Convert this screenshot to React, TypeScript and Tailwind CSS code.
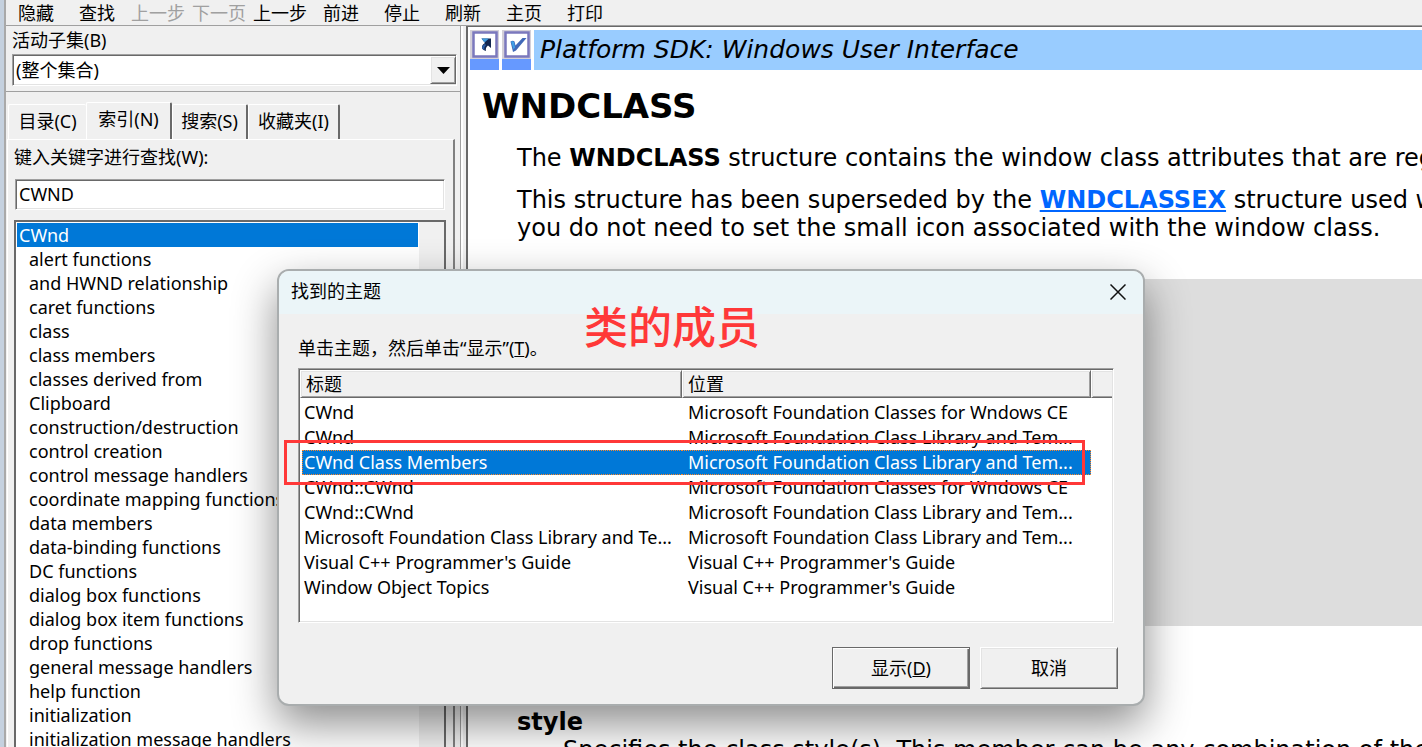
import { clsx } from 'clsx'

type Topic = {
  title: string
  location: string
}

const toolbarItems = [
  { label: '隐藏' },
  { label: '查找' },
  { label: '上一步', disabled: true },
  { label: '下一页', disabled: true },
  { label: '上一步' },
  { label: '前进' },
  { label: '停止' },
  { label: '刷新' },
  { label: '主页' },
  { label: '打印' }
]

const tabs = ['目录(C)', '索引(N)', '搜索(S)', '收藏夹(I)']

const keywords = [
  'alert functions',
  'and HWND relationship',
  'caret functions',
  'class',
  'class members',
  'classes derived from',
  'Clipboard',
  'construction/destruction',
  'control creation',
  'control message handlers',
  'coordinate mapping functions',
  'data members',
  'data-binding functions',
  'DC functions',
  'dialog box functions',
  'dialog box item functions',
  'drop functions',
  'general message handlers',
  'help function',
  'initialization',
  'initialization message handlers'
]

const topics: Topic[] = [
  { title: 'CWnd', location: 'Microsoft Foundation Classes for Wndows CE' },
  { title: 'CWnd', location: 'Microsoft Foundation Class Library and Tem...' },
  { title: 'CWnd Class Members', location: 'Microsoft Foundation Class Library and Tem...' },
  { title: 'CWnd::CWnd', location: 'Microsoft Foundation Classes for Wndows CE' },
  { title: 'CWnd::CWnd', location: 'Microsoft Foundation Class Library and Tem...' },
  {
    title: 'Microsoft Foundation Class Library and Te...',
    location: 'Microsoft Foundation Class Library and Tem...'
  },
  { title: "Visual C++ Programmer's Guide", location: "Visual C++ Programmer's Guide" },
  { title: 'Window Object Topics', location: "Visual C++ Programmer's Guide" }
]

const SELECTED_TOPIC = 2

const sunken =
  'border border-t-[#a0a0a0] border-l-[#a0a0a0] border-r-white border-b-white shadow-[inset_1px_1px_#696969,inset_-1px_-1px_#e3e3e3]'
const raised =
  'border border-t-white border-l-white border-r-[#696969] border-b-[#696969] shadow-[inset_1px_1px_#e3e3e3,inset_-1px_-1px_#a0a0a0]'

const Toolbar = () => (
  <div className="flex h-[26px] shrink-0 border-b border-[#a0a0a0]">
    {toolbarItems.map(({ label, disabled }, index) => (
      <button
        key={index}
        type="button"
        disabled={disabled}
        className={clsx(
          'w-[61px] shrink-0 pr-px pb-[2px] text-center whitespace-nowrap',
          disabled && 'text-[#a0a0a0]'
        )}
      >
        {label}
      </button>
    ))}
  </div>
)

const IndexPanel = () => (
  <div className="mr-[5px] ml-px flex min-h-0 flex-1 flex-col border-t border-r-2 border-l border-t-white border-r-[#808080] border-l-white pr-[7px] pl-[6px]">
    <label htmlFor="keyword" className="mt-[3px] leading-7">
      键入关键字进行查找(W):
    </label>
    <input
      id="keyword"
      type="text"
      defaultValue="CWND"
      className={clsx('mx-px mt-2 h-[31px] bg-white px-[3px] pb-[2px] outline-none', sunken)}
    />
    <div className="mt-[10px] flex min-h-0 flex-1 overflow-hidden border-2 border-b-0 border-[#696969] bg-white">
      <ul className="min-w-0 flex-1 whitespace-nowrap">
        <li className="mt-px mr-px ml-px h-6 bg-[#0078d7] pl-[2px] leading-6 text-white">CWnd</li>
        {keywords.map(keyword => (
          <li key={keyword} className="h-6 pl-[13px] leading-6">
            {keyword}
          </li>
        ))}
      </ul>
      <div className="w-[25px] bg-[#f0f0f0]" />
    </div>
  </div>
)

const Sidebar = () => (
  <div className="flex w-[455px] shrink-0 flex-col border-r border-[#a0a0a0]">
    <div className="border-b border-[#a0a0a0] pr-[3px] pb-[5px] pl-[6px]">
      <label htmlFor="subset" className="block h-7 leading-7">
        活动子集(B)
      </label>
      <div className="relative">
        <select
          id="subset"
          className={clsx('block h-8 w-full appearance-none bg-white px-[3px] outline-none', sunken)}
        >
          <option>(整个集合)</option>
        </select>
        <span
          className={clsx(
            'pointer-events-none absolute top-[2px] right-px flex h-7 w-[26px] items-center justify-center bg-[#f0f0f0]',
            raised
          )}
        >
          <svg width="13" height="7" viewBox="0 0 13 7" aria-hidden="true">
            <path d="M0 0h13L6.500 7z" fill="#000" />
          </svg>
        </span>
      </div>
    </div>
    <div role="tablist" className="mt-[10px] flex h-[37px] items-end pl-[2px]">
      {tabs.map((tab, index) => (
        <button
          key={tab}
          type="button"
          role="tab"
          aria-selected={index === 1}
          className={clsx(
            'shrink-0 rounded-t-xs border-t border-t-white border-l border-l-white whitespace-nowrap',
            index === 0 && 'h-[35px] w-[78px] pb-[2px]',
            index === 1 && 'h-[37px] w-[86px] border-r-2 border-r-[#696969] pb-1',
            index === 2 && 'h-[35px] w-[76px] border-r-2 border-r-[#696969] pb-[2px]',
            index === 3 && 'h-[35px] w-[92px] border-r-2 border-r-[#696969] pb-[2px]'
          )}
        >
          {tab}
        </button>
      ))}
    </div>
    <IndexPanel />
  </div>
)

const JumpIcon = () => (
  <svg width="29" height="40" viewBox="0 0 29 40" aria-hidden="true">
    <path d="M0 0h29v40H0z" fill="#d4d0d8" />
    <path d="M0 29h29v11H0z" fill="#6699ff" />
    <path d="M3.500 2.500h23v24h-23z" fill="#fff" stroke="#7b78bd" strokeWidth="2.500" />
    <path d="M11.500 8.500H21V18l-3-2.500c-2 1.500-2.500 3-2 5.500-3-.5-4.500-2.500-4-4.500.3-1.500 1.500-2.500 3-3.500z" fill="#12264f" />
    <path d="M11.500 8.500H19l-4.500 4z" fill="#3f9be0" />
    <path d="M12 17c.5-1.500 2-2.500 3-3l1 1c-1.500 1.500-2 3-1.500 5-1.500-.5-2.500-1.500-2.500-3z" fill="#2c5fa8" />
  </svg>
)

const CheckIcon = () => (
  <svg width="29" height="40" viewBox="0 0 29 40" aria-hidden="true">
    <path d="M0 0h29v40H0z" fill="#d4d0d8" />
    <path d="M0 29h29v11H0z" fill="#6699ff" />
    <path d="M3.500 2.500h23v24h-23z" fill="#fff" stroke="#7b78bd" strokeWidth="2.500" />
    <path d="M8.500 11.500c1.500-1 3-1 4 0l1 4 7-7.500h4L14 20.500l-3 1.500z" fill="#4068b8" />
    <path d="M9 11.500c1-.5 2-.5 3 .5l1 5.500-1.500 2z" fill="#3fa0e8" />
  </svg>
)

const Article = () => (
  <main className="min-w-0 flex-1 overflow-hidden border-t border-l-2 border-[#696969] bg-white pt-[3px] pl-[2px] font-['DejaVu_Sans',sans-serif] text-[24px] leading-7 whitespace-nowrap">
    <div className="flex h-10 gap-[3px]">
      <button type="button" aria-label="Jump">
        <JumpIcon />
      </button>
      <button type="button" aria-label="Check">
        <CheckIcon />
      </button>
      <p className="flex-1 bg-[#99ccff] pl-[6px] text-[25px] leading-10 italic">
        Platform SDK: Windows User Interface
      </p>
    </div>
    <h1 className="mt-4 pl-3 text-[34px] leading-10 font-bold">WNDCLASS</h1>
    <div className="pl-[47px]">
      <p className="mt-[18px]">
        The <b>WNDCLASS</b> structure contains the window class attributes that are registered by
      </p>
      <p className="mt-[14px]">
        This structure has been superseded by the{' '}
        <a href="#wndclassex" className="font-bold text-[#0066ff] underline">
          WNDCLASSEX
        </a>{' '}
        structure used with
        <br />
        you do not need to set the small icon associated with the window class.
      </p>
      <div className="mt-[37px] h-[347px] bg-[#dddddd]" />
      <dl className="mt-[82px]">
        <dt className="font-bold">style</dt>
        <dd className="pl-[46px]">
          Specifies the class style(s). This member can be any combination of the
        </dd>
      </dl>
    </div>
  </main>
)

const TopicTable = () => (
  <div className={clsx('mt-[6px] h-[255px] bg-white p-px', sunken)}>
    <table className="w-full table-fixed border-separate border-spacing-0 whitespace-nowrap">
      <colgroup>
        <col className="w-[382px]" />
        <col className="w-[409px]" />
        <col />
      </colgroup>
      <thead>
        <tr>
          {['标题', '位置'].map(heading => (
            <th
              key={heading}
              className={clsx('h-7 bg-[#f0f0f0] pl-[5px] text-left font-normal leading-6', raised)}
            >
              {heading}
            </th>
          ))}
          <td className="border border-r-0 border-t-white border-b-[#696969] border-l-white bg-[#f0f0f0] shadow-[inset_1px_1px_#e3e3e3,inset_0_-1px_#a0a0a0]" />
        </tr>
      </thead>
      <tbody>
        <tr className="h-[2px]" />
        {topics.map(({ title, location }, index) => {
          const selected = index === SELECTED_TOPIC

          return (
            <tr key={index} className={clsx(selected && 'text-white')}>
              <td className="p-0 pl-px">
                <div
                  className={clsx(
                    'h-[25px]',
                    selected
                      ? 'ml-px border border-r-0 border-dotted border-[#ff8728] bg-[#0078d7] pl-px leading-[23px]'
                      : 'pl-[3px] leading-[25px]'
                  )}
                >
                  {title}
                </div>
              </td>
              <td className="p-0">
                <div
                  className={clsx(
                    'h-[25px] pl-[6px]',
                    selected
                      ? 'border border-l-0 border-dotted border-[#ff8728] bg-[#0078d7] leading-[23px]'
                      : 'leading-[25px]'
                  )}
                >
                  {location}
                </div>
              </td>
              <td />
            </tr>
          )
        })}
      </tbody>
    </table>
  </div>
)

const TopicsDialog = () => (
  <div
    role="dialog"
    aria-labelledby="dialog-title"
    className="absolute top-[269px] left-[277px] w-[868px] rounded-xl border-2 border-[#a9adae] bg-[#f0f0f0] shadow-[0_18px_44px_rgba(0,0,0,0.45)]"
  >
    <div className="flex h-[43px] items-center justify-between rounded-t-[10px] bg-[#ebf5f8] pr-[17px] pb-[2px] pl-3">
      <h2 id="dialog-title">找到的主题</h2>
      <button type="button" aria-label="关闭">
        <svg width="16" height="16" viewBox="0 0 16 16" aria-hidden="true">
          <path d="M.5.5l15 15M15.500.5l-15 15" stroke="#111" strokeWidth="1.500" />
        </svg>
      </button>
    </div>
    <div className="pt-[21px] pr-[29px] pb-[15px] pl-[19px]">
      <p className="leading-[27px]">
        单击主题，然后单击“显示”(<u>T</u>)。
      </p>
      <TopicTable />
      <div className="-mr-1 mt-[24px] flex justify-end gap-[10px]">
        <button
          type="button"
          className="h-[42px] w-[138px] border border-[#696969] shadow-[inset_1px_1px_#fff,inset_-1px_-1px_#696969,inset_-2px_-2px_#a0a0a0]"
        >
          显示(<u>D</u>)
        </button>
        <button type="button" className={clsx('h-[42px] w-[138px]', raised)}>
          取消
        </button>
      </div>
    </div>
    {/* red marker annotations */}
    <p className="absolute top-[28px] left-[305px] text-[44px] leading-[56px] font-medium text-[#ff3838]">
      类的成员
    </p>
    <div className="absolute top-[169px] left-[5px] h-[45px] w-[801px] border-3 border-[#ff3838]" />
  </div>
)

export default function App() {
  return (
    <div className="relative flex h-screen overflow-hidden bg-[#f0f0f0] font-['Noto_Sans','Noto_Sans_CJK_SC',sans-serif] text-[18px] text-black">
      <div className="w-[6px] shrink-0 border-r-2 border-[#a9a9a9] bg-[#c5d1df]" />
      <div className="flex min-w-0 flex-1 flex-col">
        <Toolbar />
        <div className="flex min-h-0 flex-1">
          <Sidebar />
          <div className="w-[5px] shrink-0 border-l-2 border-white" />
          <Article />
        </div>
      </div>
      <TopicsDialog />
    </div>
  )
}
